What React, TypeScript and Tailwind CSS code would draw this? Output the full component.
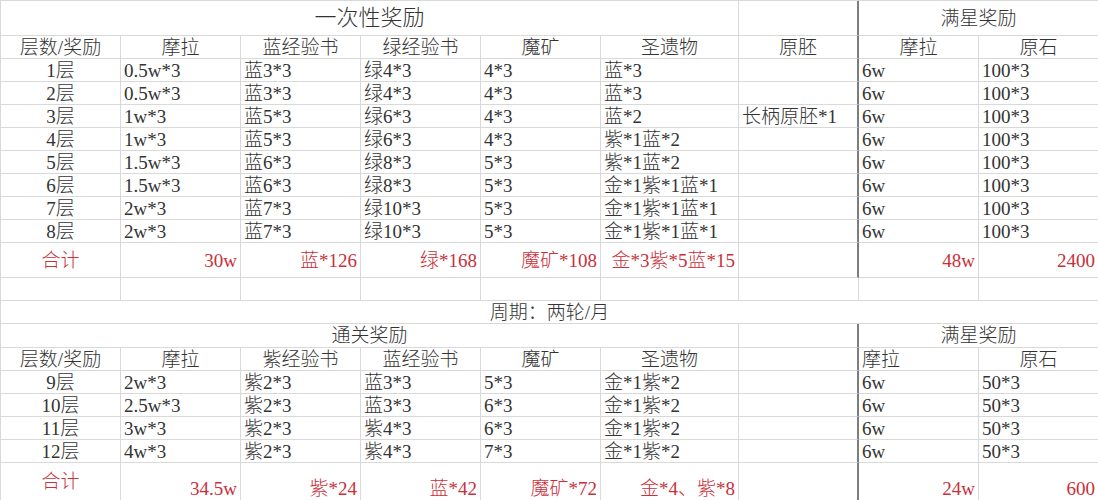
import clsx from 'clsx';
import type { ReactNode } from 'react';

const GRID = 'grid grid-cols-[120px_120px_120px_120px_120px_138px_120px_120px_120px]';

type Align = 'left' | 'center' | 'right';

function Cell({
  children,
  align = 'left',
  red = false,
  thick = false,
  span,
  bottom = false,
  big = false,
}: {
  children?: ReactNode;
  align?: Align;
  red?: boolean;
  thick?: boolean;
  span?: string;
  bottom?: boolean;
  big?: boolean;
}) {
  return (
    <div
      className={clsx(
        'flex overflow-hidden whitespace-nowrap border-b border-r border-[#d9d9d9] px-[3px] leading-none',
        bottom ? 'items-end pb-[2px]' : 'items-center',
        align === 'left' && 'justify-start',
        align === 'center' && 'justify-center',
        align === 'right' && 'justify-end',
        red ? 'text-[#c9303a]' : 'text-[#333333]',
        thick && 'border-r-2 border-r-[#7d7d7d]',
        big ? 'text-[22px]' : 'text-[19px]',
        span
      )}
    >
      {children}
    </div>
  );
}

function Row({ h, children }: { h: string; children: ReactNode }) {
  return <div className={clsx(GRID, h)}>{children}</div>;
}

const topRows = [
  ['1层', '0.5w*3', '蓝3*3', '绿4*3', '4*3', '蓝*3', '', '6w', '100*3'],
  ['2层', '0.5w*3', '蓝3*3', '绿4*3', '4*3', '蓝*3', '', '6w', '100*3'],
  ['3层', '1w*3', '蓝5*3', '绿6*3', '4*3', '蓝*2', '长柄原胚*1', '6w', '100*3'],
  ['4层', '1w*3', '蓝5*3', '绿6*3', '4*3', '紫*1蓝*2', '', '6w', '100*3'],
  ['5层', '1.5w*3', '蓝6*3', '绿8*3', '5*3', '紫*1蓝*2', '', '6w', '100*3'],
  ['6层', '1.5w*3', '蓝6*3', '绿8*3', '5*3', '金*1紫*1蓝*1', '', '6w', '100*3'],
  ['7层', '2w*3', '蓝7*3', '绿10*3', '5*3', '金*1紫*1蓝*1', '', '6w', '100*3'],
  ['8层', '2w*3', '蓝7*3', '绿10*3', '5*3', '金*1紫*1蓝*1', '', '6w', '100*3'],
];

const bottomRows = [
  ['9层', '2w*3', '紫2*3', '蓝3*3', '5*3', '金*1紫*2', '', '6w', '50*3'],
  ['10层', '2.5w*3', '紫2*3', '蓝3*3', '6*3', '金*1紫*2', '', '6w', '50*3'],
  ['11层', '3w*3', '紫2*3', '紫4*3', '6*3', '金*1紫*2', '', '6w', '50*3'],
  ['12层', '4w*3', '紫2*3', '紫4*3', '7*3', '金*1紫*2', '', '6w', '50*3'],
];

function DataRow({ cells }: { cells: string[] }) {
  return (
    <Row h="h-[23px]">
      {cells.map((c, i) => (
        <Cell key={i} align={i === 0 ? 'center' : 'left'} thick={i === 6}>
          {c}
        </Cell>
      ))}
    </Row>
  );
}

function TotalRow({ cells, h, bottom }: { cells: string[]; h: string; bottom?: boolean }) {
  return (
    <Row h={h}>
      {cells.map((c, i) => (
        <Cell key={i} align={i === 0 ? 'center' : 'right'} red thick={i === 6} bottom={bottom && i !== 0}>
          {c}
        </Cell>
      ))}
    </Row>
  );
}

export default function App() {
  return (
    <div
      className="w-[1098px] h-[500px] overflow-hidden bg-white border-l border-t border-[#d9d9d9] font-light"
      style={{ fontFamily: '"Liberation Serif", "Noto Sans CJK SC", serif' }}
    >
      {/* 一次性奖励 */}
      <Row h="h-[35px]">
        <Cell span="col-span-6" align="center" big>
          一次性奖励
        </Cell>
        <Cell thick />
        <Cell span="col-span-2" align="center">
          满星奖励
        </Cell>
      </Row>
      <Row h="h-[23px]">
        {['层数/奖励', '摩拉', '蓝经验书', '绿经验书', '魔矿', '圣遗物', '原胚', '摩拉', '原石'].map((t, i) => (
          <Cell key={i} align="center" thick={i === 6}>
            {t}
          </Cell>
        ))}
      </Row>
      {topRows.map((r, i) => (
        <DataRow key={i} cells={r} />
      ))}
      <TotalRow h="h-[35px]" cells={['合计', '30w', '蓝*126', '绿*168', '魔矿*108', '金*3紫*5蓝*15', '', '48w', '2400']} />
      <Row h="h-[23px]">
        {Array.from({ length: 9 }).map((_, i) => (
          <Cell key={i} />
        ))}
      </Row>

      {/* 周期 */}
      <Row h="h-[23px]">
        <Cell span="col-span-9" align="center">
          周期：两轮/月
        </Cell>
      </Row>

      {/* 通关奖励 */}
      <Row h="h-[24px]">
        <Cell span="col-span-6" align="center">
          通关奖励
        </Cell>
        <Cell thick />
        <Cell span="col-span-2" align="center">
          满星奖励
        </Cell>
      </Row>
      <Row h="h-[23px]">
        {['层数/奖励', '摩拉', '紫经验书', '蓝经验书', '魔矿', '圣遗物', '', '摩拉', '原石'].map((t, i) => (
          <Cell key={i} align={i === 7 ? 'left' : 'center'} thick={i === 6}>
            {t}
          </Cell>
        ))}
      </Row>
      {bottomRows.map((r, i) => (
        <DataRow key={i} cells={r} />
      ))}
      <TotalRow h="h-[38px]" bottom cells={['合计', '34.5w', '紫*24', '蓝*42', '魔矿*72', '金*4、紫*8', '', '24w', '600']} />
    </div>
  );
}
